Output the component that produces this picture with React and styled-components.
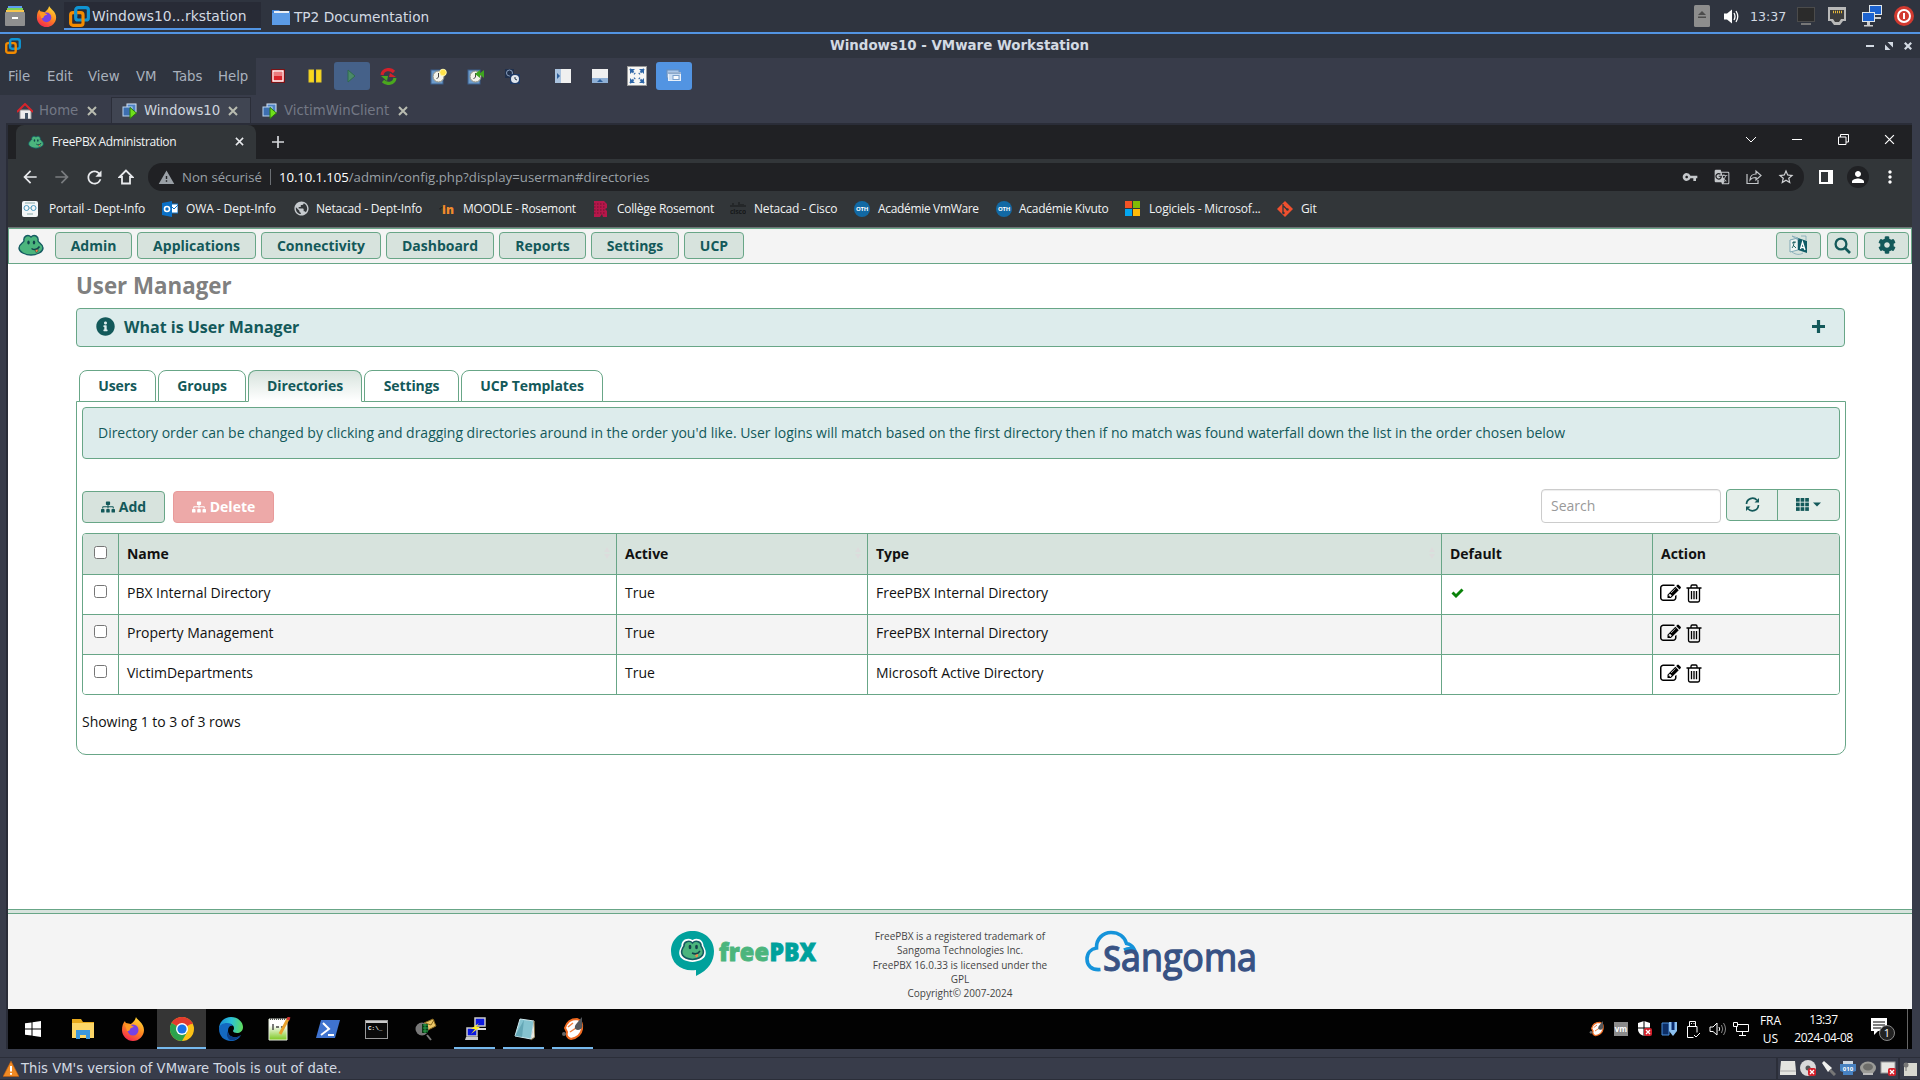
import React from 'react';
import styled, { createGlobalStyle, css } from 'styled-components';
import { FaInfoCircle, FaSitemap, FaCog } from 'react-icons/fa';
import { MdArrowBack, MdArrowForward, MdRefresh, MdVpnKey, MdGTranslate, MdStarBorder, MdMoreVert, MdPerson, MdWarning, MdPublic } from 'react-icons/md';

const ui = '"DejaVu Sans", sans-serif';
const web = '"Open Sans", sans-serif';
const green = '#68a687';
const teal = '#13595a';
const mint = '#d7e3dd';

const GlobalStyle = createGlobalStyle`
  * { box-sizing: border-box; }
  body { margin: 0; background: #383c4a; overflow: hidden; }
  svg { display: block; flex: none; }
`;

/* ---------- host desktop ---------- */
const Desktop = styled.div`
  width: 1920px;
  height: 1080px;
  display: flex;
  flex-direction: column;
  background: #383c4a;
  font-family: ${ui};
  font-size: 13.3px;
  color: #d3dae3;
  white-space: nowrap;
`;
const TopPanel = styled.header`
  height: 34px;
  flex: none;
  display: flex;
  align-items: center;
  background: #2f343f;
  border-bottom: 2px solid #5294e2;
  padding: 0 6px 0 5px;
`;
const TaskItem = styled.div`
  display: flex;
  align-items: center;
  height: 28px;
  width: ${p => p.$w}px;
  margin-left: ${p => (p.$active ? 7 : 8)}px;
  padding: ${p => (p.$active ? '2px 0 0 5px' : '4px 0 0 3px')};
  gap: ${p => (p.$active ? 2 : 4)}px;
  font-size: ${p => (p.$active ? 13.9 : 13.7)}px;
  background: ${p => (p.$active ? '#282b36' : 'transparent')};
  border-bottom: 2px solid ${p => (p.$active ? '#5294e2' : 'transparent')};
`;
const Slot = styled.div`
  margin-left: ${p => p.$l || 0}px;
  width: ${p => p.$w}px;
  display: flex;
  align-items: center;
  justify-content: center;
  flex: none;
`;
const Spacer = styled.div`flex: 1;`;
const Clock = styled.span`
  margin-left: 11px;
  width: 36px;
  font-size: 12.6px;
`;
const TitleBar = styled.div`
  height: 24px;
  flex: none;
  display: grid;
  grid-template-columns: 100px 1fr 98px;
  align-items: center;
  background: #2f343f;
  padding: 0 8px 1px 5px;
  font-weight: 700;
  font-size: 13.4px;
  text-align: center;
`;
const TitleButtons = styled.div`
  display: flex;
  justify-content: flex-end;
  gap: 11px;
`;
const MenuRow = styled.div`
  height: 37px;
  flex: none;
  display: flex;
`;
const MenuBar = styled.nav`
  width: 256px;
  display: flex;
  align-items: center;
  background: #2f343f;
  padding-left: 8px;
  color: #a9b1bd;
  font-size: 13.3px;
`;
const MenuItem = styled.span`width: ${p => p.$w}px;`;
const Tools = styled.div`
  display: flex;
  align-items: center;
  padding: 0 0 1px 4px;
`;
const Tool = styled.div`
  width: ${p => (p.$on ? 36 : 37)}px;
  height: 28px;
  margin-left: ${p => (p.$gap ? 13 : 0)}px;
  margin-right: ${p => (p.$on ? 1 : 0)}px;
  padding-right: ${p => (p.$on ? 0 : 2)}px;
  display: flex;
  align-items: center;
  justify-content: center;
  border-radius: 3px;
  ${p => p.$on && css`background: ${p.$on};`}
`;
const VmTabs = styled.div`
  height: 28px;
  flex: none;
  display: flex;
  align-items: flex-end;
`;
const VmTab = styled.div`
  height: 26px;
  width: ${p => p.$w}px;
  padding-left: ${p => p.$pl}px;
  display: flex;
  align-items: center;
  gap: 6px;
  color: ${p => (p.$active ? '#cfd6df' : '#737885')};
  background: ${p => (p.$active ? '#404552' : 'transparent')};
  border: 1px solid ${p => (p.$active ? '#2b2e39' : 'transparent')};
  border-bottom: 0;
`;
const VmTabText = styled.span`width: ${p => p.$w}px;`;
const VmFrame = styled.div`
  width: 1906px;
  height: 926px;
  flex: none;
  margin-left: 6px;
  padding: 2px 0 0 2px;
  background: #2a2d38;
`;
const StatusBar = styled.footer`
  margin-top: 8px;
  height: 23px;
  display: flex;
  align-items: center;
  border-top: 1px solid #2b2e39;
  border-bottom: 1px solid #2b2e39;
  padding: 0 0 0 3px;
`;
const StatusText = styled.span`
  margin-left: 2px;
  font-size: 13.2px;
`;
const StatusCell = styled.div`
  display: flex;
  height: 100%;
  border-left: 2px solid #2b2e39;
  width: ${p => p.$w}px;
`;

/* ---------- guest: browser ---------- */
const Guest = styled.div`
  width: 1904px;
  height: 924px;
  display: flex;
  flex-direction: column;
  font-family: ${web};
  background: #fff;
`;
const TabStrip = styled.div`
  height: 34px;
  flex: none;
  display: flex;
  background: #202124;
  padding-left: 8px;
`;
const BrowserTab = styled.div`
  width: 240px;
  height: 34px;
  display: flex;
  align-items: center;
  padding: 0 12px 1px 12px;
  gap: 8px;
  background: #323639;
  border-radius: 8px 8px 0 0;
  color: #f1f3f4;
  font-size: 12px;
  letter-spacing: -0.38px;
`;
const WinButtons = styled.div`
  display: flex;
  height: 28px;
`;
const Toolbar = styled.div`
  height: 36px;
  flex: none;
  display: flex;
  align-items: center;
  background: #323639;
  padding: 0 6px;
`;
const Omnibox = styled.div`
  width: 1656px;
  height: 28px;
  margin: 0 6px;
  display: flex;
  align-items: center;
  border-radius: 14px;
  background: #202124;
  color: #9aa0a6;
  font-size: 13.2px;
  padding: 0 2px 0 10px;
`;
const Security = styled.span`
  margin-left: 7px;
  width: 89px;
  border-right: 1px solid #6b6f74;
  line-height: 16px;
`;
const Url = styled.span`
  margin-left: 8px;
  letter-spacing: 0.05px;
  b { font-weight: 400; color: #fff; letter-spacing: -0.1px; }
`;
const Avatar = styled.div`
  width: 22px;
  height: 22px;
  border-radius: 50%;
  background: #202124;
  display: flex;
  align-items: center;
  justify-content: center;
`;
const Bookmarks = styled.div`
  height: 33px;
  flex: none;
  display: flex;
  padding-left: 14px;
  background: #323639;
  border-bottom: 1px solid #6e7376;
`;
const Bookmark = styled.div`
  width: ${p => p.$w}px;
  display: flex;
  align-items: center;
  gap: ${p => p.$g || 8}px;
  padding-bottom: 5px;
  color: #f1f3f4;
  font-size: 12px;
  letter-spacing: ${p => p.$ls || -0.17}px;
`;

/* ---------- guest: FreePBX page ---------- */
const NavBar = styled.nav`
  height: 36px;
  flex: none;
  display: flex;
  align-items: center;
  padding: 0 2px 2px 9px;
  background: #f4f4f4;
  border: 1px solid ${green};
`;
const NavButton = styled.button`
  width: ${p => p.$w}px;
  height: 27px;
  margin: 1px 0 0 ${p => p.$l || 5}px;
  padding: 0 0 1px;
  display: flex;
  align-items: center;
  justify-content: center;
  border: 1px solid ${green};
  border-radius: 4px;
  background: ${mint};
  color: ${teal};
  font: 700 14px ${web};
`;
const Content = styled.main`
  flex: 1;
  padding: 5px 66px 0 68px;
  font-size: 14px;
  color: #111;
`;
const Heading = styled.h1`
  margin: 0 0 9px;
  height: 30px;
  line-height: 33px;
  font-size: 22.3px;
  font-weight: 700;
  color: #808080;
`;
const InfoBar = styled.div`
  width: 1769px;
  height: 39px;
  display: flex;
  align-items: center;
  padding: 0 19px 2px 19px;
  border: 1px solid ${green};
  border-radius: 4px;
  background: #ddecec;
  color: ${teal};
  font-size: 16px;
  font-weight: 700;
`;
const InfoText = styled.span`
  flex: 1;
  margin-left: 9px;
`;
const Tabs = styled.div`
  display: flex;
  gap: 2px;
  margin: 23px 0 -1px;
  padding-left: 3px;
  position: relative;
`;
const Tab = styled.div`
  height: 32px;
  width: ${p => p.$w}px;
  padding-bottom: 1px;
  display: flex;
  align-items: center;
  justify-content: center;
  border: 1px solid ${green};
  border-bottom-color: ${p => (p.$active ? '#fff' : green)};
  border-radius: 8px 8px 0 0;
  background: ${p => (p.$active ? `linear-gradient(${mint}, #fff)` : '#fff')};
  color: ${teal};
  font-weight: 700;
  letter-spacing: -0.1px;
`;
const Panel = styled.section`
  width: 1770px;
  height: 354px;
  padding: 5px;
  border: 1px solid ${green};
  border-radius: 0 0 10px 10px;
`;
const Alert = styled.div`
  height: 52px;
  display: flex;
  align-items: center;
  padding: 0 15px 1px;
  border: 1px solid ${green};
  border-radius: 4px;
  background: #ddecec;
  color: ${teal};
  letter-spacing: -0.014px;
`;
const Actions = styled.div`
  display: flex;
  margin-top: 30px;
  height: 44px;
`;
const ActionButton = styled.button`
  width: ${p => p.$w}px;
  height: 32px;
  margin: 2px 8px 0 0;
  padding: 0 0 1px;
  display: flex;
  align-items: center;
  justify-content: center;
  gap: 4px;
  border: 1px solid ${p => (p.$danger ? '#e89a9a' : green)};
  border-radius: 4px;
  background: ${p => (p.$danger ? '#eda9a8' : mint)};
  color: ${p => (p.$danger ? '#fff' : teal)};
  font: 700 14px ${web};
`;
const Search = styled.input`
  width: 180px;
  height: 34px;
  margin-right: 5px;
  padding: 0 9px 2px;
  border: 1px solid #ccc;
  border-radius: 4px;
  box-shadow: inset 0 1px 1px rgba(0, 0, 0, 0.075);
  font: 14px ${web};
  &::placeholder { color: #999; opacity: 1; }
`;
const Group = styled.div`
  display: flex;
  width: 114px;
  height: 32px;
  border: 1px solid ${green};
  border-radius: 4px;
  background: #e5eeea;
  color: ${teal};
`;
const GroupItem = styled.div`
  width: ${p => p.$w}px;
  display: flex;
  align-items: center;
  justify-content: center;
  gap: 4px;
  padding-bottom: 1px;
  & + & { border-left: 1px solid ${green}; }
`;
const Table = styled.div`
  border: 1px solid ${green};
  border-radius: 4px;
  overflow: hidden;
`;
const Row = styled.div`
  display: grid;
  grid-template-columns: 36px 498px 251px 574px 211px 186px;
  height: ${p => (p.$head ? 41 : 40)}px;
  background: ${p => (p.$head ? mint : p.$alt ? '#f4f4f4' : '#fff')};
  font-weight: ${p => (p.$head ? 700 : 400)};
  border-bottom: 1px solid ${green};
  &:last-child { border-bottom: 0; height: 39px; }
`;
const Cell = styled.div`
  display: flex;
  align-items: center;
  justify-content: ${p => (p.$sort ? 'space-between' : 'flex-start')};
  gap: 5px;
  padding: 0 5px ${p => (p.$sort || p.$top ? 2 : 4)}px 8px;
  letter-spacing: -0.02px;
  border-right: 1px solid ${green};
  &:last-child { border-right: 0; }
`;
const CheckCell = styled(Cell)`
  padding: 0 0 ${p => (p.$top ? 3 : 6)}px 11px;
`;
const IconCell = styled(Cell)`
  padding: 0 5px ${p => (p.$up ? 4 : 2)}px ${p => (p.$up ? 9 : 7)}px;
`;
const Check = styled.input`
  width: 13px;
  height: 13px;
  margin: 0;
`;
const Showing = styled.p`
  margin: 17px 0 0;
  line-height: 20px;
  letter-spacing: -0.03px;
`;
const Footer = styled.footer`
  height: 100px;
  flex: none;
  background: #f4f4f4;
`;
const FooterRule = styled.div`
  height: 5px;
  border: solid ${green};
  border-width: 1px 0;
  background: ${mint};
`;
const FooterRow = styled.div`
  display: flex;
  align-items: flex-start;
  padding: 15px 0 0 663px;
`;
const Legal = styled.div`
  width: 182px;
  margin: 0 34px 0 50px;
  text-align: center;
  font-size: 10px;
  line-height: 14.28px;
  color: #444;
`;

/* ---------- guest: taskbar ---------- */
const Taskbar = styled.div`
  height: 40px;
  flex: none;
  display: flex;
  background: #020202;
  color: #fff;
`;
const TaskButton = styled.div`
  width: ${p => p.$w || 49}px;
  height: 40px;
  display: flex;
  align-items: center;
  justify-content: center;
  background: ${p => (p.$active ? '#353535' : 'transparent')};
`;
const Running = styled(TaskButton)`
  width: ${p => (p.$active ? 49 : 41)}px;
  margin: 0 ${p => (p.$active ? 0 : 4)}px;
  border-bottom: 2px solid #76b9ed;
  padding-top: 2px;
`;
const TrayText = styled.div`
  width: ${p => p.$w}px;
  display: flex;
  flex-direction: column;
  align-items: center;
  padding-top: ${p => p.$pt || 2}px;
  font-size: 12px;
  line-height: 17.5px;
  letter-spacing: ${p => p.$ls || 0}px;
`;
const PeekLine = styled.div`
  width: 1px;
  margin: 0 4px 0 3px;
  background: #666;
`;

/* ---------- drawings ---------- */
const Svg = ({ w = 16, h, vb, children, ...r }) => (
  <svg width={w} height={h || w} viewBox={vb || `0 0 ${w} ${h || w}`} fill="none" {...r}>{children}</svg>
);
const Frog = ({ w = 26, h = 22 }) => (
  <Svg w={w} h={h} vb="0 0 26 22">
    <path d="M6 7C5 2 10 0 13 3c3-3 8-1 7 4 1 2 5 3 5 7 0 4-6 7-12 7S1 18 1 14c0-4 4-5 5-7z" fill="#4bb57d" stroke="#155b62" strokeWidth="1.4" />
    <ellipse cx="10.500" cy="8.500" rx="1.200" ry="1.900" fill="#12424b" /><ellipse cx="16" cy="8.500" rx="1.200" ry="1.900" fill="#12424b" />
    <path d="M13.500 14.500c3 2 6 1 8-2" stroke="#12424b" strokeWidth="1.500" /><path d="M17 16l3-1v2.500l-2 1z" fill="#f3884a" stroke="#12424b" strokeWidth=".5" />
  </Svg>
);
const VmLogo = ({ s = 22 }) => (
  <Svg w={s} vb="0 0 22 22">
    <rect x="7" y="1.700" width="13.300" height="13" rx="2.500" stroke="#0f94d2" strokeWidth="3.300" />
    <rect x="1.700" y="7" width="13" height="13.300" rx="2.500" stroke="#f38b00" strokeWidth="3.300" />
    <path d="M7 11V4.500" stroke="#0f94d2" strokeWidth="3.300" />
  </Svg>
);
const Firefox = ({ s = 22 }) => (
  <Svg w={s} vb="0 0 24 24">
    <defs><linearGradient id="ff" x1=".8" y1="0" x2=".3" y2="1"><stop stopColor="#ffe03a" /><stop offset=".5" stopColor="#ff8a1f" /><stop offset="1" stopColor="#f3264f" /></linearGradient></defs>
    <path d="M15 0c1 3 8 6 8 13 0 6-5 11-11 11S1 19 1 13C1 9 2 6 4 4c0 1 1 2 1 2l5 1c2-2 4-3 5-7z" fill="url(#ff)" />
    <circle cx="12" cy="13" r="5.500" fill="#7542e5" /><path d="M4 8c4-2 6 0 9 2-2 0-3 1-4 2 0 2-2 2-3 2z" fill="#ff9a24" />
  </Svg>
);
const VmTabIcon = () => (
  <Svg w={16}>
    <rect x="5" y="1" width="9" height="8" fill="#4f83c4" stroke="#d9e8f7" /><rect x="1" y="4" width="9" height="9" fill="#3d6fb0" stroke="#bcd6f0" />
    <path d="M8 4.500v11l6.500-5.500z" fill="#6fe01b" stroke="#2c7a0d" />
  </Svg>
);
const Cross = ({ s = 10, c = '#b9bcb0', t = 2 }) => (
  <Svg w={s} vb="0 0 10 10"><path d="M1 1l8 8M9 1L1 9" stroke={c} strokeWidth={t} /></Svg>
);
const Red = ({ x, y, r = 4 }) => (
  <g><rect x={x - r} y={y - r} width={2 * r} height={2 * r} rx="2" fill="#d3202b" /><path d={`M${x - 2} ${y - 2}l4 4m0-4l-4 4`} stroke="#fff" strokeWidth="1.300" /></g>
);
const SnapDisk = ({ kind }) => (
  <Svg w={17}>
    <rect x="1" y="2" width="12" height="14" fill="#6c9bcb" stroke="#3b5e8c" />
    <circle cx="8.500" cy="8.500" r="5.500" fill="#f2f2ea" stroke="#8c8c80" /><path d="M8.500 5v4l-2 2" stroke="#444" />
    {kind === 'new' && <circle cx="13" cy="4.500" r="3.300" fill="#ffe24a" stroke="#fff6a8" />}
    {kind === 'back' && <path d="M8 6l5-4v8zM12 6l5-4v8z" fill="#3ea51f" />}
  </Svg>
);
const Manage = () => (
  <Svg w={17}>
    <rect x="1" y="1" width="9" height="9" fill="#20304c" /><circle cx="5.500" cy="5" r="3" stroke="#8aa0bf" />
    <rect x="6" y="6" width="10" height="10" fill="#1e3a66" /><circle cx="11" cy="11" r="4" fill="#dfe6ee" /><path d="M11 9v2l2 1" stroke="#234" />
  </Svg>
);
const Chrome = () => (
  <Svg w={24}>
    <circle cx="12" cy="12" r="12" fill="#fbc116" />
    <path d="M12 12L1.600 6A12 12 0 0 1 22.400 6z" fill="#e33b2e" />
    <path d="M1.600 6A12 12 0 0 0 12 24l5.200-9L12 12z" fill="#2ba24c" /><path d="M12 6.400h10.500" stroke="#e33b2e" strokeWidth="1.400" />
    <circle cx="12" cy="12" r="6" fill="#fff" /><circle cx="12" cy="12" r="4.600" fill="#1a73e8" />
  </Svg>
);
const Edge = () => (
  <Svg w={24}>
    <defs><linearGradient id="eg" x1="0" y1=".4" x2="1" y2=".5"><stop stopColor="#1b8fd8" /><stop offset=".5" stopColor="#2cc3d6" /><stop offset="1" stopColor="#5fdd5d" /></linearGradient></defs>
    <path d="M0 12C0 5 5 0 12 0s12 5 12 10c0 4-3 6-6 6-2 0-4-1-4-2 0-1 1-1 1-3 0-2-2-4-5-4-5 0-10 3-10 5z" fill="url(#eg)" />
    <path d="M0 12c0-4 4-6 8-6 3 0 5 1 6 3-3-1-5 1-5 5 0 5 5 7 9 6 2 0 3-1 4-2-2 4-6 6-10 6C5 24 0 19 0 12z" fill="#1469c0" />
    <path d="M9 14c0 5 5 7 9 6l4-2c-3 4-7 6-11 5-3-2-4-6-2-9z" fill="#0d3f86" />
  </Svg>
);
const Pcs = () => (
  <Svg w={24} h={24}>
    <rect x="12" y="1" width="10" height="8" fill="#0b18e0" stroke="#ccc" strokeWidth="1.500" /><path d="M12 11h11v2h-12z" fill="#ddd" />
    <rect x="4" y="11" width="10" height="8" fill="#0b18e0" stroke="#ccc" strokeWidth="1.500" /><path d="M3 20h12v3h-13z" fill="#ccc" />
    <path d="M16 6l-8 6h4l-4 5 9-7h-4z" fill="#ffee22" />
  </Svg>
);
const Oni = ({ s = 24 }) => (
  <Svg w={s} vb="0 0 24 24">
    <path d="M4 11C6 4 11 2 16 2c4 1 6 5 5 10-1 6-6 9-11 10-4-1-5-4-4-7z" fill="#fff" stroke="#f06a20" strokeWidth="2" />
    <path d="M7 10l5-4M9 15l6-4" stroke="#f08040" strokeWidth="1.500" /><path d="M21 0l-5 6c-3 3-3 7 1 7s5-4 4-6z" fill="#55585c" />
    <circle cx="3" cy="17" r="2" fill="#666" />
  </Svg>
);
const Shot = () => (
  <Svg w={24}>
    <path d="M10 6l9-4 3 7-8 4z" fill="#ebc667" stroke="#8c6a1e" /><path d="M11 6l6 2 3-5" stroke="#8c6a1e" />
    <circle cx="8" cy="12" r="6.500" fill="#787878" /><path d="M8 7h6v9H8z" fill="#0a3b16" /><path d="M9 8h5M9 11h5M9 14h5M11 7v9" stroke="#2ba34a" /><path d="M13 18l4 5" stroke="#777" strokeWidth="2" />
  </Svg>
);
const NotepadPP = () => (
  <Svg w={24}>
    <defs><linearGradient id="np" x1="0" y1="0" x2="0" y2="1"><stop offset=".3" stopColor="#fff" /><stop offset="1" stopColor="#7cc820" /></linearGradient></defs>
    <path d="M2 2h18v21H2z" fill="url(#np)" stroke="#e6eedd" /><path d="M3 2h16" stroke="#555" strokeDasharray="1 1" strokeWidth="2" />
    <path d="M6 7v6M9 10h3M14 10h3" stroke="#444" strokeWidth="1.400" /><path d="M21 2l-8 15" stroke="#e8a12c" strokeWidth="3" /><path d="M22 0l-1 3" stroke="#c33" strokeWidth="3" />
  </Svg>
);
const Sorter = () => (
  <Svg w={8} h={14}><path d="M4 1l3 5H1zM4 13L1 8h6z" fill="#dcdcdc" /></Svg>
);
const RefreshGlyph = () => (
  <Svg w={15} vb="0 0 15 15"><path d="M1.500 7A6 6 0 0 1 12 3.300M13.500 8A6 6 0 0 1 3 11.700" stroke={teal} strokeWidth="1.700" /><path d="M14 1v4.500H9.500zM1 14V9.500h4.500z" fill={teal} /></Svg>
);
const GridGlyph = () => (
  <Svg w={13}>{[0, 1, 2].map(r => [0, 1, 2].map(c => <rect key={`${r}${c}`} x={c * 4.6} y={r * 4.6} width="3.700" height="3.700" fill={teal} />))}</Svg>
);
const CheckGlyph = () => (
  <Svg w={13} h={10}><path d="M1.500 4.500l3.500 3.500L11.500 1.500" stroke="#0a820a" strokeWidth="2.900" /></Svg>
);
const PlusGlyph = () => (
  <Svg w={13}><path d="M6.500 0v13M0 6.500h13" stroke={teal} strokeWidth="3.200" /></Svg>
);
const Pencil = () => (
  <Svg w={21} vb="0 0 1792 1792">
    <path fill="#000" d="M888 1184l116-116-152-152-116 116v56h96v96h56zm440-720q-16-16-33 1l-350 350q-17 17-1 33t33-1l350-350q17-17 1-33zm80 594v190q0 119-84.500 203.500t-203.500 84.500h-832q-119 0-203.500-84.500t-84.500-203.500v-832q0-119 84.500-203.500t203.500-84.500h832q63 0 117 25 15 7 18 23 3 17-9 29l-49 49q-14 14-32 8-23-6-45-6h-832q-66 0-113 47t-47 113v832q0 66 47 113t113 47h832q66 0 113-47t47-113v-126q0-13 9-22l64-64q15-15 35-7t20 29zm-96-738l288 288-672 672h-288v-288zm444 132l-92 92-288-288 92-92q28-28 68-28t68 28l152 152q28 28 28 68t-28 68z" />
  </Svg>
);
const Trash = () => (
  <Svg w={16} h={19}><path d="M.5 4h15M5 4V2.200Q5 1 6.200 1h3.600Q11 1 11 2.200V4M2.500 4v12.200q0 1.800 1.500 1.800h8q1.500 0 1.500-1.800V4M5.500 7v8.200M8 7v8.200M10.500 7v8.200" stroke="#000" strokeWidth="1.350" /></Svg>
);
const Magnifier = () => (
  <Svg w={17}><circle cx="7" cy="7" r="5.400" stroke={teal} strokeWidth="2.300" /><path d="M11 11l5 5" stroke={teal} strokeWidth="2.600" /></Svg>
);
const LangGlyph = () => (
  <Svg w={19} h={20}>
    <path d="M1 5l8-2v12l-8 2z" fill="#eef5f2" stroke="#7fa7b5" /><path d="M3 8l4-1M5 6c0 4-1 6-2 7M4 10l3 3" stroke={teal} strokeWidth=".9" />
    <path d="M9 3l9 3v12l-9-3z" fill="#0f5c66" /><path d="M11.500 14l2-7 2.500 8M12 12l3 .8" stroke="#fff" strokeWidth="1.300" />
    <path d="M3 1l6 2V5zM3 17c4 3 8 3 11 1M12 1h5v4" stroke="#7fa7b5" strokeWidth=".8" />
  </Svg>
);
const FreePbxLogo = () => (
  <Svg w={148} h={48}>
    <path d="M21.500 2C33 2 43 10 43 22c0 10-5 19-18 25v-6C10 43 0 34 0 22 0 10 10 2 21.500 2z" fill="#00a19c" />
    <path d="M10.500 17c-.5-6 6-9 11-6 5-3 11 0 11 6 5 8 2 15-11 16-13-1-16-8-11-16z" fill="#fff" />
    <path d="M13 17c-.5-4 5-6.500 8.500-3 3.500-3.500 9-1 8.500 3 5 7 2 12.500-8.500 13.500C11 29.500 8 24 13 17z" fill="#4bb57d" stroke="#155b62" strokeWidth="1.600" />
    <ellipse cx="19" cy="18" rx="1.400" ry="2.200" fill="#12424b" /><ellipse cx="25.500" cy="18" rx="1.400" ry="2.200" fill="#12424b" />
    <path d="M21 24c3 1.500 6 1 8-2" stroke="#12424b" strokeWidth="1.500" /><path d="M24 26l3-1v2.500l-2 1z" fill="#f3884a" />
    <text x="48" y="32" fontFamily="Open Sans" fontWeight="800" fontSize="24" textLength="50" lengthAdjust="spacingAndGlyphs" fill="#4bb57d" stroke="#4bb57d" strokeWidth=".8">free</text>
    <text x="98.500" y="32" fontFamily="Open Sans" fontWeight="800" fontSize="24" textLength="46.500" lengthAdjust="spacingAndGlyphs" fill="#00a19c" stroke="#00a19c" strokeWidth=".8">PBX</text>
  </Svg>
);
const SangomaLogo = () => (
  <Svg w={176} h={64}>
    <path d="M15.500 40.500C6 41.500 2 36 2 30c0-6 4-10 9.500-11C11 10 18 3.500 26 3.500c8 0 13.500 4.500 15.500 11 3 .5 6 2.500 7.500 5.500-4-.8-7-.5-10 1" stroke="#1593da" strokeWidth="3.600" />
    <text x="18" y="42" fontFamily="Open Sans" fontWeight="600" fontSize="34" textLength="18" lengthAdjust="spacingAndGlyphs" fill="#385284" stroke="#385284" strokeWidth=".8">S</text>
    <text x="36" y="42" fontFamily="Open Sans" fontWeight="400" fontSize="38" textLength="136" lengthAdjust="spacingAndGlyphs" fill="#385284" stroke="#385284" strokeWidth="1.400">angoma</text>
  </Svg>
);

const files = (
  <Svg w={20}><path d="M3 0h14v2H3z" fill="#5c9df0" /><path d="M2 2h16v2H2z" fill="#7bd35a" /><path d="M1 4h18v2H1z" fill="#f7c64e" /><rect y="6" width="20" height="14" rx="1" fill="#8f8f8f" /><path d="M7 12h6" stroke="#fff" strokeWidth="2" /></Svg>
);
const tools = [
  { i: <Svg w={14}><rect x=".5" y=".5" width="13" height="13" fill="#d8232a" stroke="#7b1215" /><path d="M2 2h10v10H2z" stroke="#fff" strokeWidth="1.300" /><path d="M3 3h8v4H3z" fill="#ec7b7e" /></Svg> },
  { i: <Svg w={14}><rect x="1" y="1" width="4.500" height="12" fill="#fbd91b" stroke="#e6c92a" /><rect x="8.500" y="1" width="4.500" height="12" fill="#fbd91b" stroke="#e6c92a" /></Svg> },
  { on: '#456189', i: <Svg w={14}><path d="M3 1v12l7-6z" fill="#4b8a68" stroke="#2f6a50" /></Svg> },
  { i: <Svg w={17}><path d="M2 7c1-6 8-7 12-3" stroke="#d5202a" strokeWidth="3.200" /><path d="M16 9l-7 0 1-4z" fill="#d5202a" /><path d="M15 10c-1 6-8 7-12 3" stroke="#4aa81e" strokeWidth="3.200" /><path d="M1 8h7l-1 5z" fill="#4aa81e" /></Svg> },
  { gap: 1, i: <SnapDisk kind="new" /> },
  { i: <SnapDisk kind="back" /> },
  { i: <Manage /> },
  { gap: 1, i: <Svg w={16} h={14}><path d="M0 0h16v14H0z" fill="#f0f0f0" /><path d="M0 0h6v14H0z" fill="#aac3df" /><path d="M2 4v6l3-3z" fill="#2b5d99" /></Svg> },
  { i: <Svg w={16} h={14}><path d="M0 0h16v14H0z" fill="#f0f0f0" /><path d="M0 9h16v5H0z" fill="#8fb0d6" /><path d="M5 13h6l-3-3z" fill="#2b5d99" /></Svg> },
  { i: <Svg w={20}><rect x=".5" y=".5" width="19" height="19" fill="#f7f7f5" stroke="#999" /><path d="M3 3h5L3 8zM17 3v5l-5-5zM3 17v-5l5 5zM17 17h-5l5-5z" fill="#2f67a8" /><path d="M3 3l5 5M17 3l-5 5M3 17l5-5M17 17l-5-5" stroke="#2f67a8" strokeDasharray="2 1" strokeWidth="2" /></Svg> },
  { on: '#5294e2', i: <Svg w={16} h={14}><rect x="1" y="1" width="12" height="8" fill="#a9c6ea" stroke="#6b8fbb" /><rect x="2.500" y="3.500" width="12" height="8" fill="#c9dcf2" stroke="#e8f0fa" /><path d="M2 4h13" stroke="#4f76a6" /><rect x="7" y="6.500" width="6" height="4" fill="#f8fafd" stroke="#7aa0cc" /></Svg> },
];
const oth = <Svg w={16}><circle cx="8" cy="8" r="8" fill="#1269a4" /><text x="8" y="10.300" textAnchor="middle" fontFamily="Open Sans" fontWeight="700" fontSize="6" fill="#fff">OTH</text></Svg>;
const bookmarks = [
  { t: 'Portail - Dept-Info', w: 140, g: 11, i: <Svg w={16}><rect width="16" height="16" rx="2" fill="#f3f6f8" /><circle cx="4.500" cy="7" r="2.500" stroke="#4a9ac0" /><circle cx="11.500" cy="7" r="2.500" stroke="#4a9ac0" /><path d="M5 13h6M7 7h2M3 2h10" stroke="#8aa" /></Svg> },
  { t: 'OWA - Dept-Info', w: 131, ls: -0.08, i: <Svg w={16}><rect x="7" y="3" width="9" height="9" fill="#fff" stroke="#1072c4" /><path d="M8 4l4 4 4-4" stroke="#1072c4" /><path d="M0 2l10-2v16L0 14z" fill="#0a70c7" /><circle cx="5" cy="8" r="2.500" stroke="#fff" strokeWidth="1.600" /></Svg> },
  { t: 'Netacad - Dept-Info', w: 146, g: 6, ls: -0.18, i: <MdPublic size={17} color="#c6cace" /> },
  { t: 'MOODLE - Rosemont', w: 155, g: 7, ls: -0.32, i: <Svg w={17} h={16}><path d="M0 7l5-3 3 2v2H2v3" fill="#222" stroke="#3a3a3a" /><text x="3" y="13" fontFamily="Open Sans" fontWeight="800" fontSize="12" letterSpacing="0" fill="#f08b2c">in</text></Svg> },
  { t: 'Collège Rosemont', w: 136, g: 10, ls: -0.25, i: <Svg w={13} h={16}><path d="M0 0h10l3 3v4l-2 1 2 2v6H9l-1-3-2 3H0z" fill="#b5174a" /><path d="M0 3h12M0 6h12M0 9h12M0 12h12" stroke="#6d1231" strokeDasharray="1.500 1.500" /></Svg> },
  { t: 'Netacad - Cisco', w: 124, i: <Svg w={16}><path d="M1 4v2M3 2v4M5 4v2M7 4v2M9 1v5M11 3v3M13 3v3M15 4v2" stroke="#17191b" /><text x="0" y="13" fontFamily="Open Sans" fontWeight="700" fontSize="7" textLength="16" lengthAdjust="spacingAndGlyphs" fill="#17191b">cisco</text></Svg> },
  { t: 'Académie VmWare', w: 142, ls: -0.33, i: oth },
  { t: 'Académie Kivuto', w: 129, g: 7, ls: -0.25, i: oth },
  { t: 'Logiciels - Microsof...', w: 152, g: 9, i: <Svg w={15}><path d="M0 0h7v7H0z" fill="#f35325" /><path d="M8 0h7v7H8z" fill="#81bc06" /><path d="M0 8h7v7H0z" fill="#05a6f0" /><path d="M8 8h7v7H8z" fill="#ffba08" /></Svg> },
  { t: 'Git', w: 60, i: <Svg w={16}><path d="M8 0l8 8-8 8-8-8z" fill="#f0502f" /><path d="M6 3v9M6.500 5l4 4" stroke="#323639" strokeWidth="1.300" /><circle cx="6.500" cy="12" r="1.200" fill="#323639" /><circle cx="10.500" cy="8.500" r="1.200" fill="#323639" /></Svg> },
];
const nav = [['Admin', 77, 2], ['Applications', 119, 5], ['Connectivity', 120, 5], ['Dashboard', 108, 5], ['Reports', 87, 5], ['Settings', 88, 5], ['UCP', 60, 5]];
const tabs = [['Users', 77], ['Groups', 88], ['Directories', 114], ['Settings', 95], ['UCP Templates', 142]];
const rows = [
  ['PBX Internal Directory', 'True', 'FreePBX Internal Directory', true],
  ['Property Management', 'True', 'FreePBX Internal Directory', false],
  ['VictimDepartments', 'True', 'Microsoft Active Directory', false],
];
const w = '#fff';

const HostChrome = () => (
  <>
    <TopPanel>
      {files}
      <Slot $w={22} $l={10}><Firefox s={21} /></Slot>
      <TaskItem $active $w={197}><VmLogo s={21} />Windows10...rkstation</TaskItem>
      <TaskItem $w={200}>
        <Svg w={18} h={16}><path d="M0 1h7l1 1h10v14H0z" fill="#3f7fd0" /><path d="M2 2h15v3H2z" fill="#e8eef5" /><path d="M0 4h18v12H0z" fill="#5b9be6" /></Svg>
        TP2 Documentation
      </TaskItem>
      <Spacer />
      <Slot $w={16}><Svg w={16} h={22}><rect width="16" height="22" rx="1.500" fill="#8d8d8d" /><path d="M4 10l4-4 4 4zM4 11.500h8v1.500H4z" fill="#4c4c4c" /></Svg></Slot>
      <Slot $w={16} $l={13}><Svg w={15}><path d="M0 4.500h3l5-4v14l-5-4H0z" fill={w} /><path d="M10 4q2 3.500 0 7M12 2q3.500 5.500 0 11" stroke={w} strokeWidth="1.300" /></Svg></Slot>
      <Clock>13:37</Clock>
      <Slot $w={18} $l={11}><Svg w={18}><rect x=".5" y=".5" width="17" height="14" fill="#2b2b2b" stroke="#4b4b4b" /><path d="M4 16h10v2H4z" fill="#777" /></Svg></Slot>
      <Slot $w={20} $l={12}><Svg w={20} h={18}><path d="M1 0h18v14h-3l-3 4H7l-3-4H1z" fill="#b9b9b9" /><path d="M3 3h14v9h-3l-2 3H8l-2-3H3z" fill="#3d3d3d" /><path d="M6 5h9" stroke="#e8b93a" strokeWidth="2.500" strokeDasharray="1 1" /></Svg></Slot>
      <Slot $w={20} $l={15}><Svg w={20} h={22}><rect x="7.500" y=".5" width="12" height="9" fill="#1d63cf" stroke="#dfe6ea" /><path d="M12 12h7v2h-7z" fill="#ccc" /><rect x=".5" y="7.500" width="12" height="9" fill="#1d63cf" stroke="#dfe6ea" /><path d="M5 17h3v3H5zM2 20h9v1.500H2z" fill="#ccc" /></Svg></Slot>
      <Slot $w={20} $l={12}><Svg w={20}><circle cx="10" cy="10" r="10" fill="#d23a30" /><circle cx="10" cy="10" r="6" stroke={w} strokeWidth="2" /><path d="M10 7v6" stroke={w} strokeWidth="2" /></Svg></Slot>
    </TopPanel>
    <TitleBar>
      <VmLogo s={16} />
      <span>Windows10 - VMware Workstation</span>
      <TitleButtons>
        <Svg w={8}><path d="M0 4h8" stroke="#d3dae3" strokeWidth="2" /></Svg>
        <Svg w={8}><path d="M2.500 0H8v5.500zM0 2.500V8h5.500z" fill="#d3dae3" /></Svg>
        <Cross s={8} c="#d3dae3" t={2.800} />
      </TitleButtons>
    </TitleBar>
    <MenuRow>
      <MenuBar>
        {[['File', 39], ['Edit', 41], ['View', 48], ['VM', 37], ['Tabs', 45], ['Help', 38]].map(([t, n]) => <MenuItem key={t} $w={n}>{t}</MenuItem>)}
      </MenuBar>
      <Tools>{tools.map((t, k) => <Tool key={k} $on={t.on} $gap={t.gap}>{t.i}</Tool>)}</Tools>
    </MenuRow>
    <VmTabs>
      <VmTab $w={111} $pl={16}>
        <Svg w={16}><path d="M3 7h11v9H3z" fill="#eee" stroke="#999" /><path d="M8 10h3v6H8z" fill="#456" /><path d="M0 9l8-8 8 8" stroke="#d6242b" strokeWidth="2" /></Svg>
        <VmTabText $w={42}>Home</VmTabText><Cross />
      </VmTab>
      <VmTab $w={140} $pl={10} $active><VmTabIcon /><VmTabText $w={78}>Windows10</VmTabText><Cross /></VmTab>
      <VmTab $w={160} $pl={10}><VmTabIcon /><VmTabText $w={108}>VictimWinClient</VmTabText><Cross /></VmTab>
    </VmTabs>
  </>
);

const Browser = () => (
  <>
    <TabStrip>
      <BrowserTab><Frog w={16} h={14} /><span>FreePBX Administration</span><Spacer /><Cross s={9} c="#e8eaed" t={1.700} /></BrowserTab>
      <Slot $w={44}><Svg w={12}><path d="M6 0v12M0 6h12" stroke="#d5d7da" strokeWidth="1.700" /></Svg></Slot>
      <Spacer />
      <WinButtons>
        <Slot $w={46}><Svg w={10} h={7}><path d="M0 1l5 5 5-5" stroke={w} /></Svg></Slot>
        <Slot $w={46}><Svg w={10} h={1}><path d="M0 .5h10" stroke={w} /></Svg></Slot>
        <Slot $w={46}><Svg w={11}><path d="M.5 3h7.500v7.500H.5zM2.500 3V.5h8V8H8" stroke={w} /></Svg></Slot>
        <Slot $w={46}><Cross s={11} c={w} t={1.100} /></Slot>
      </WinButtons>
    </TabStrip>
    <Toolbar>
      <Slot $w={32}><MdArrowBack size={20} color="#e8eaed" /></Slot>
      <Slot $w={32}><MdArrowForward size={20} color="#797c7f" /></Slot>
      <Slot $w={32}><MdRefresh size={21} color="#e8eaed" /></Slot>
      <Slot $w={32}><Svg w={16}><path d="M8 1.500L1.500 8H4v6.500h8V8h2.500z" stroke="#e8eaed" strokeWidth="1.800" /></Svg></Slot>
      <Omnibox>
        <MdWarning size={17} color="#9aa0a6" />
        <Security>Non sécurisé</Security>
        <Url><b>10.10.1.105</b>/admin/config.php?display=userman#directories</Url>
        <Spacer />
        <Slot $w={32}><MdVpnKey size={16} color="#c4c7ca" /></Slot>
        <Slot $w={32}><MdGTranslate size={16} color="#c4c7ca" /></Slot>
        <Slot $w={32}><Svg w={16}><path d="M1 5v9.500h11V11M4 11c0-4 3-6 6-6V2l5 4.500-5 4.500V8.500c-3 0-5 1-6 2.500z" stroke="#c4c7ca" strokeWidth="1.200" /></Svg></Slot>
        <Slot $w={32}><MdStarBorder size={18} color="#d0d2d5" /></Slot>
      </Omnibox>
      <Slot $w={32}><Svg w={14}><path d="M1 1h12v12H1z" stroke={w} strokeWidth="2" /><path d="M9 1h4v12H9z" fill={w} /></Svg></Slot>
      <Slot $w={32}><Avatar><MdPerson size={18} color={w} /></Avatar></Slot>
      <Slot $w={32}><MdMoreVert size={20} color={w} /></Slot>
    </Toolbar>
    <Bookmarks>
      {bookmarks.map(b => <Bookmark key={b.t} $w={b.w} $g={b.g} $ls={b.ls}>{b.i}{b.t}</Bookmark>)}
    </Bookmarks>
  </>
);

const Page = () => (
  <>
    <NavBar>
      <Frog />
      <Slot $w={9} />
      {nav.map(([t, n, l]) => <NavButton key={t} $w={n} $l={l}>{t}</NavButton>)}
      <Spacer />
      <NavButton $w={45}><LangGlyph /></NavButton>
      <NavButton $w={31} $l={6}><Magnifier /></NavButton>
      <NavButton $w={45} $l={6}><FaCog size={18} /></NavButton>
    </NavBar>
    <Content>
      <Heading>User Manager</Heading>
      <InfoBar><FaInfoCircle size={19} /><InfoText>What is User Manager</InfoText><PlusGlyph /></InfoBar>
      <Tabs>{tabs.map(([t, n]) => <Tab key={t} $w={n} $active={t === 'Directories'}>{t}</Tab>)}</Tabs>
      <Panel>
        <Alert>Directory order can be changed by clicking and dragging directories around in the order you'd like. User logins will match based on the first directory then if no match was found waterfall down the list in the order chosen below</Alert>
        <Actions>
          <ActionButton $w={83}><FaSitemap size={14} />Add</ActionButton>
          <ActionButton $w={101} $danger><FaSitemap size={14} />Delete</ActionButton>
          <Spacer />
          <Search placeholder="Search" />
          <Group>
            <GroupItem $w={50}><RefreshGlyph /></GroupItem>
            <GroupItem $w={62}><GridGlyph /><Svg w={8} h={5}><path d="M0 .5h8l-4 4z" fill={teal} /></Svg></GroupItem>
          </Group>
        </Actions>
        <Table>
          <Row $head>
            <CheckCell $top><Check type="checkbox" /></CheckCell>
            <Cell $sort>Name<Sorter /></Cell>
            <Cell $sort>Active<Sorter /></Cell>
            <Cell $sort>Type<Sorter /></Cell>
            <Cell $top>Default</Cell>
            <Cell $top>Action</Cell>
          </Row>
          {rows.map((r, k) => (
            <Row key={r[0]} $alt={k === 1}>
              <CheckCell><Check type="checkbox" /></CheckCell>
              <Cell>{r[0]}</Cell>
              <Cell>{r[1]}</Cell>
              <Cell>{r[2]}</Cell>
              <IconCell $up>{r[3] && <CheckGlyph />}</IconCell>
              <IconCell><Pencil /><Trash /></IconCell>
            </Row>
          ))}
        </Table>
        <Showing>Showing 1 to 3 of 3 rows</Showing>
      </Panel>
    </Content>
    <Footer>
      <FooterRule />
      <FooterRow>
        <FreePbxLogo />
        <Legal>FreePBX is a registered trademark of<br />Sangoma Technologies Inc.<br />FreePBX 16.0.33 is licensed under the<br />GPL<br />Copyright© 2007-2024</Legal>
        <SangomaLogo />
      </FooterRow>
    </Footer>
  </>
);

const WinTaskbar = () => (
  <Taskbar>
    <TaskButton $w={49}><Svg w={16}><path d="M0 2.300l6.500-.9v6.100H0zM7.500 1.200L16 0v7.500H7.500zM0 8.500h6.500v6.100L0 13.700zM7.500 8.500H16V16l-8.500-1.200z" fill={w} /></Svg></TaskButton>
    <TaskButton $w={51}><Svg w={22} h={20}><path d="M0 0h9l2 3h11v16H0z" fill="#e7a91c" /><path d="M0 4h22v15H0z" fill="#fcd667" /><path d="M4 11h14v9h-4v-4H8v4H4z" fill="#3b97dd" /></Svg></TaskButton>
    <TaskButton><Firefox s={24} /></TaskButton>
    <Running $active><Chrome /></Running>
    <TaskButton><Edge /></TaskButton>
    <TaskButton $w={48}><NotepadPP /></TaskButton>
    <TaskButton><Svg w={24} h={20}><path d="M5 1h19l-5 18H0z" fill="#3f73cf" /><path d="M7 4l6 6-8 6M12 16h6" stroke={w} strokeWidth="2" /></Svg></TaskButton>
    <TaskButton><Svg w={23} h={19}><rect x=".5" y=".5" width="22" height="18" fill="#0a0a0a" stroke="#999" /><path d="M1 2h21" stroke="#ccc" strokeWidth="2" /><text x="3" y="10" fontFamily="Liberation Mono" fontSize="6" fontWeight="700" fill={w}>C:\_</text></Svg></TaskButton>
    <TaskButton><Shot /></TaskButton>
    <Running><Pcs /></Running>
    <Running><Svg w={22} h={24}><path d="M7 2l14 2-3 18-16-3z" fill="#85c3d0" stroke="#cfe9ee" /><path d="M21 4l1 16-4 3" fill="#e8e8e0" stroke="#7c6a3d" /><path d="M2 19L11 3l-2 17z" fill="#4e94a5" opacity=".6" /></Svg></Running>
    <Running><Oni /></Running>
    <Spacer />
    <Slot $w={24}><Oni s={16} /></Slot>
    <Slot $w={24}><Svg w={14}><rect width="14" height="14" fill="#8b8b8b" /><text x="7" y="10" textAnchor="middle" fontFamily="Open Sans" fontWeight="700" fontSize="8" fill={w}>vm</text></Svg></Slot>
    <Slot $w={24}><Svg w={16}><path d="M1 2l6-2 6 2v6c0 4-3 6-6 7-3-1-6-3-6-7z" fill={w} /><path d="M7 0v15M1 7h12" stroke="#000" /><Red x={11} y={11} /></Svg></Slot>
    <Slot $w={24}><Svg w={17} h={16}><path d="M1 2h7v12H1z" fill="#0c2e66" stroke="#4b8fdc" /><path d="M8 1h8v9l-4 5-4-5z" fill="#8cc0f0" /><path d="M12 1v8" stroke="#0a2a6c" strokeWidth="3" /></Svg></Slot>
    <Slot $w={24}><Svg w={14} h={17}><path d="M3.500.5h6v5h-6zM1.500 5.500h9.500v6M1.500 5.500v11h6M5 2.500h1M7.500 2.500h1M8 14l2 2 4-4" stroke={w} /></Svg></Slot>
    <Slot $w={24}><Svg w={17} h={15}><path d="M1 5h3l4-4v12L4 9.500H1z" stroke={w} /><path d="M10 5q1.500 2 0 4" stroke={w} /><path d="M12.500 3q2.500 4 0 8M14.500 1q4 6 0 12" stroke="#888" /></Svg></Slot>
    <Slot $w={24}><Svg w={16} h={14}><path d="M5 2.500h10.500v7H3.500V5M9.500 10v3M6 13.500h7M.5.5h4v4h-4z" stroke={w} /></Svg></Slot>
    <TrayText $w={35} $pt={3}><span>FRA</span><span>US</span></TrayText>
    <TrayText $w={71} $ls={-0.400}><span>13:37</span><span>2024-04-08</span></TrayText>
    <Slot $w={45}><Svg w={26} h={26}><path d="M2 2h16v13H9l-4 4v-4H2z" fill={w} /><path d="M4 6h12M4 9h12M4 12h8" stroke="#000" /><circle cx="18" cy="17" r="7.500" fill="#222" stroke="#888" /><text x="18" y="21" textAnchor="middle" fontFamily="Open Sans" fontSize="11" fill={w}>1</text></Svg></Slot>
    <PeekLine />
  </Taskbar>
);

export default function App() {
  return (
    <>
      <GlobalStyle />
      <Desktop>
        <HostChrome />
        <VmFrame>
          <Guest>
            <Browser />
            <Page />
            <WinTaskbar />
          </Guest>
        </VmFrame>
        <StatusBar>
          <Svg w={16}><path d="M8 0l8 15.500H0z" fill="#f08a24" stroke="#b85a10" strokeWidth=".6" /><path d="M8 5v5.500M8 12v1.800" stroke={w} strokeWidth="2" /></Svg>
          <StatusText>This VM's version of VMware Tools is out of date.</StatusText>
          <Spacer />
          <StatusCell $w={122}>
            <Slot $w={20}><Svg w={16} h={15}><path d="M1 0h14l1 10v4H0v-4z" fill="#e4e4e0" /><path d="M0 10h16" stroke="#aaa" /></Svg></Slot>
            <Slot $w={20}><Svg w={17}><circle cx="8" cy="8" r="8" fill="#d9d9d9" /><circle cx="8" cy="8" r="2.500" fill="#555" /><Red x={12} y={12} /></Svg></Slot>
            <Slot $w={20}><Svg w={15}><path d="M1 2l2-2 8 7-4 4z" fill="#f0f0ee" /><path d="M9 9l5 5" stroke="#777" strokeWidth="3" /></Svg></Slot>
            <Slot $w={20}><Svg w={16}><path d="M3 0h10v4H3z" fill="#cfd8e0" /><path d="M0 3h16v7l-3 1v3H3v-3l-3-1z" fill="#4781c0" /><text x="8" y="10" textAnchor="middle" fontFamily="Open Sans" fontWeight="700" fontSize="6" fill={w}>010</text></Svg></Slot>
            <Slot $w={20}><Svg w={16}><ellipse cx="8" cy="7" rx="8" ry="6.500" fill="#9b9b97" /><ellipse cx="8" cy="6" rx="5" ry="3.500" fill="#6d6d6a" /><path d="M3 13h10" stroke="#bbb" strokeWidth="2" /></Svg></Slot>
            <Slot $w={20}><Svg w={17} h={15}><rect x="1" y="1" width="14" height="11" fill="#e7e7e3" stroke="#999" /><Red x={12} y={11} /></Svg></Slot>
          </StatusCell>
          <StatusCell $w={22}><Slot $w={20}><Svg w={14}><path d="M1 1h13v13H1z" fill="#d8d8d0" /><circle cx="3" cy="3" r="2.500" fill="#777" /><path d="M3 5v4" stroke="#777" /></Svg></Slot></StatusCell>
        </StatusBar>
      </Desktop>
    </>
  );
}
